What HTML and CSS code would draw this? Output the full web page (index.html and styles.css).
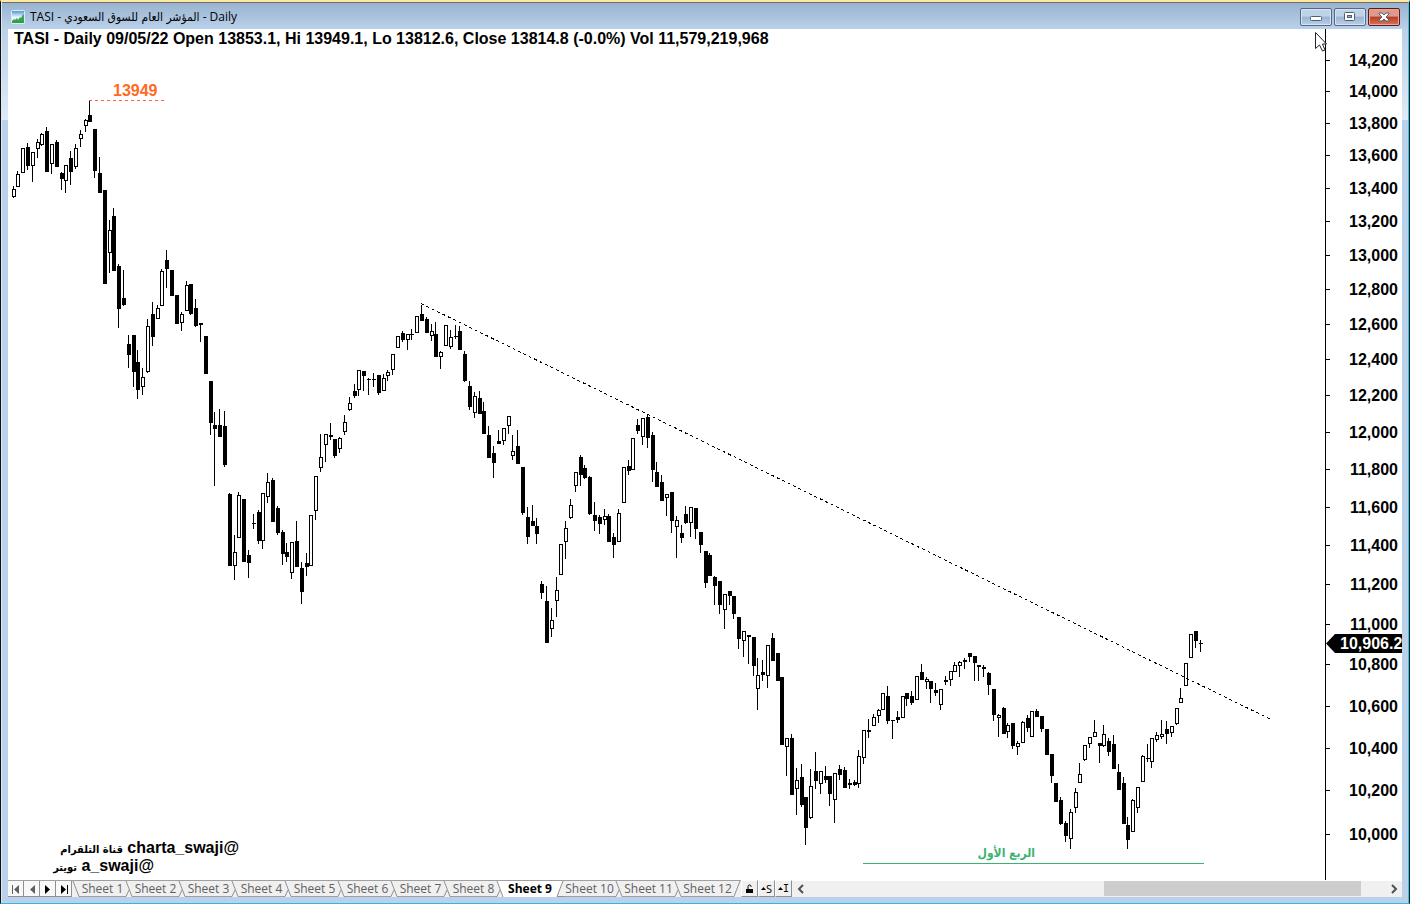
FILE: index.html
```html
<!DOCTYPE html>
<html lang="en">
<head>
<meta charset="utf-8">
<title>TASI - Daily</title>
<link rel="stylesheet" href="styles.css">
</head>
<body>
<div class="window">
  <header class="titlebar">
    <svg class="app-icon" width="14" height="14" viewBox="0 0 14 14" aria-hidden="true">
      <defs>
        <linearGradient id="sky" x1="0" y1="0" x2="0" y2="1"><stop offset="0" stop-color="#4a90d0"/><stop offset="0.5" stop-color="#e8f4fc"/><stop offset="1" stop-color="#fff"/></linearGradient>
        <linearGradient id="hill" x1="0" y1="0" x2="0" y2="1"><stop offset="0" stop-color="#3a9ac8"/><stop offset="0.5" stop-color="#3aa648"/><stop offset="1" stop-color="#2f9c44"/></linearGradient>
      </defs>
      <rect x="0.5" y="0.5" width="13" height="13" rx="1" fill="url(#sky)" stroke="#d8ecfa"/>
      <path d="M1 13V11l2-2 1 1 2-2 1 2 2-3 1 1 2-4 1 1v8z" fill="url(#hill)"/>
    </svg>
    <h1 class="caption" dir="ltr">TASI - <bdi class="caption-ar">المؤشر العام للسوق السعودي</bdi> - Daily</h1>
    <div class="controls">
      <button class="control" type="button" aria-label="Minimize"><svg width="12" height="12" viewBox="0 0 12 12"><rect x="0.5" y="5.5" width="11" height="4" rx="1" fill="#fff" stroke="#535f70"/></svg></button>
      <button class="control" type="button" aria-label="Maximize"><svg width="12" height="12" viewBox="0 0 12 12"><rect x="0.5" y="1.5" width="10" height="8" rx="1" fill="#fff" stroke="#535f70"/><rect x="3.500" y="4.500" width="4" height="2" fill="#8fb0d4" stroke="#535f70"/></svg></button>
      <button class="control control-close" type="button" aria-label="Close"><svg width="12" height="12" viewBox="0 0 12 12"><path d="M1 2h3l2 2 2-2h3v1L8 6l3 3v1H8L6 8l-2 2H1V9l3-3-3-3z" fill="#fff" stroke="#535f70"/></svg></button>
    </div>
  </header>

  <main class="client">
    <svg class="chart" viewBox="8 29 1394 851" role="img" aria-label="TASI daily candlestick chart">
      <text class="label" x="14" y="44">TASI - Daily 09/05/22 Open 13853.1, Hi 13949.1, Lo 13812.6, Close 13814.8 (-0.0%) Vol 11,579,219,968</text>
      <g id="candles" class="candles"></g>
      <path class="trend" d="M421 303.500L1271 719.500"/>
      <path class="peak-line" d="M89 100.500H164"/>
      <text class="label peak" x="113" y="96">13949</text>
      <path class="base-line" d="M863 863.500H1204"/>
      <text class="label quarter" x="1035" y="857" direction="rtl">الربع الأول</text>
      <text class="label" x="239" y="853" direction="rtl">@charta_swaji <tspan class="ar">قناة التلقرام</tspan></text>
      <text class="label" x="154" y="871" direction="rtl">@a_swaji <tspan class="ar">تويتر</tspan></text>
      <path class="axis" d="M1325.500 29V880"/>
      <g id="scale"></g>
      <path d="M1326 643.500L1335 634H1402V653H1335z"/>
      <text class="label last" x="1340" y="649">10,906.2</text>
      <path class="pointer" d="M1315.500 32.500V48.500L1319.500 45L1322.500 51L1325 50L1322.500 44H1326.500z"/>
    </svg>

    <footer class="bottom">
      <nav class="steps" aria-label="Sheet navigation">
        <button class="step dim" type="button" aria-label="First sheet"><svg width="12" height="12" viewBox="0 0 12 12"><path d="M2 2h1v9H2zM9 2v9L4 6.500z"/></svg></button>
        <button class="step dim" type="button" aria-label="Previous sheet"><svg width="12" height="12" viewBox="0 0 12 12"><path d="M9 2v9L4 6.500z"/></svg></button>
        <button class="step" type="button" aria-label="Next sheet"><svg width="12" height="12" viewBox="0 0 12 12"><path d="M3 2v9l5-4.500z"/></svg></button>
        <button class="step" type="button" aria-label="Last sheet"><svg width="12" height="12" viewBox="0 0 12 12"><path d="M3 2v9l5-4.500zM9 2h1v9H9z"/></svg></button>
      </nav>
      <div class="tabs" id="tabs" role="tablist"></div>
      <div class="tools">
        <button class="tool" type="button" aria-label="Lock"><svg width="10" height="12" viewBox="0 0 10 12"><path d="M1 6h7v4H1z"/><path d="M3 6V3.500a1.500 1.500 0 0 1 3 0V4" fill="none" stroke="#000"/></svg></button>
        <button class="tool" type="button"><svg width="5" height="3" viewBox="0 0 5 3"><path d="M0 3L2.500 0L5 3z"/></svg>S</button>
        <button class="tool" type="button"><svg width="5" height="3" viewBox="0 0 5 3"><path d="M0 3L2.500 0L5 3z"/></svg><span class="serif-i">I</span></button>
      </div>
      <div class="scroll">
        <button class="arrow" type="button" aria-label="Scroll left"><svg width="8" height="10" viewBox="0 0 8 10"><path d="M6 1L2 5l4 4"/></svg></button>
        <div class="track"><div class="before"></div><div class="thumb"></div><div class="after"></div></div>
        <button class="arrow" type="button" aria-label="Scroll right"><svg width="8" height="10" viewBox="0 0 8 10"><path d="M2 1l4 4-4 4"/></svg></button>
      </div>
    </footer>
  </main>
</div>
<script src="chart.js"></script>
</body>
</html>
```
FILE: styles.css
```css
* { box-sizing: border-box; }
body {
  margin: 0;
  height: 100vh;
  overflow: hidden;
  background: #b9d1ea;
  font: 12px/16px "Open Sans", "Noto Sans", "DejaVu Sans", sans-serif;
  color: #000;
}
button { margin: 0; padding: 0; font: inherit; color: inherit; }
.window {
  display: flex;
  flex-direction: column;
  height: 100%;
  border-left: 1px solid #101010;
  border-right: 1px solid #102028;
  border-bottom: 1px solid #34b8d8;
  border-top: 2px solid #ffe8a0;
  box-shadow: inset 1px 0 #dce8f4, inset -1px 0 #34c4e4;
  background: linear-gradient(#b9d1ea 26px, #dfeaf6 118px, #b9d1ea 118px);
}
.titlebar {
  display: flex;
  align-items: center;
  height: 27px;
  flex: none;
  margin: 0 1px;
  padding: 1px 8px 0 9px;
  border-top: 1px solid #6c6c6c;
  background: linear-gradient(#9ab3cf, #b9d1ea);
}
.app-icon { margin-right: 5px; }
.caption { margin: 0; flex: 1; font-size: 12px; font-weight: 400; line-height: 18px; white-space: nowrap; }
.caption-ar { font-family: "DejaVu Sans Condensed", "DejaVu Sans", sans-serif; font-size: 12px; }
.controls { display: flex; gap: 2px; }
.control {
  display: flex;
  align-items: center;
  justify-content: center;
  width: 32px;
  height: 18px;
  border: 1px solid #56677f;
  border-radius: 2px;
  box-shadow: inset 0 0 0 1px #d5e3f2;
  background: linear-gradient(#bfd3e8 45%, #98b4d3 50%, #b8d0e8);
}
.control-close {
  border-color: #5c1a1a;
  box-shadow: inset 0 0 0 1px #e6a79c;
  background: linear-gradient(#e09a8c 45%, #b93a22 50%, #d5795a);
}
.client {
  display: flex;
  flex-direction: column;
  flex: 1;
  min-height: 0;
  margin: 0 7px 6px;
  background: #fff;
}
.chart { display: block; flex: 1; min-height: 0; width: 100%; }
.label { font: bold 16px "Liberation Sans", "DejaVu Sans", sans-serif; fill: #000; }
.label.peak { fill: #ff6a1f; }
.label.quarter { font: bold 12px "DejaVu Sans Condensed", "DejaVu Sans", sans-serif; fill: #3cb371; }
.label .ar { font: bold 11px "DejaVu Sans Condensed", "DejaVu Sans", sans-serif; }
.label.last { fill: #fff; }
.candles, .trend, .peak-line, .base-line, .axis { shape-rendering: crispEdges; }
.hollow { fill: #fff; stroke: #000; }
.trend { stroke: #000; stroke-dasharray: 3 3; }
.peak-line { stroke: #ff6347; stroke-dasharray: 3 3; }
.base-line { stroke: #3cb371; }
.axis { stroke: #000; }
.pointer { fill: #fff; stroke: #202030; }
.bottom { display: flex; flex: none; height: 17px; background: #f0f0f0; }
.steps { display: flex; border-top: 1px solid #a0a0a0; }
.step {
  display: flex;
  align-items: center;
  justify-content: center;
  width: 16px;
  border: 0;
  border-right: 1px solid #909090;
  border-bottom: 1px solid #909090;
  background: #f8f8f8;
}
.step.dim { fill: #606060; }
.tabs { display: flex; border-top: 1px solid #a0a0a0; }
.tab {
  width: 45px;
  border: 0;
  border-bottom: 1px solid #a0a0a0;
  background: #f0f0f0;
  color: #606060;
  line-height: 14px;
  white-space: nowrap;
}
.tab.wide { width: 51px; }
.tab.active { width: 52px; border-color: #fff; background: #fff; color: #000; font-weight: 700; }
.edge { display: block; fill: none; stroke: #909090; }
.tools { display: flex; }
.tool {
  display: flex;
  align-items: center;
  justify-content: center;
  width: 17px;
  border: 1px solid #909090;
  border-top-color: #fff;
  border-left-color: #fff;
  background: #f0f0f0;
  font-size: 11px;
}
.serif-i { font-family: "DejaVu Sans Mono", monospace; font-size: 10px; }
.scroll { display: flex; flex: 1; padding-bottom: 1px; border-top: 1px solid #fff; }
.arrow { display: flex; align-items: center; justify-content: center; width: 17px; border: 0; background: none; }
.arrow path { fill: none; stroke: #505050; stroke-width: 2; }
.track { display: flex; flex: 1; }
.before { flex: 296; }
.thumb { flex: 257; background: #cdcdcd; }
.after { flex: 24; }
```
FILE: chart.js
```js
const NS = "http://www.w3.org/2000/svg";

function add(parent, name, attrs) {
  const el = document.createElementNS(NS, name);
  for (const key in attrs) el.setAttribute(key, attrs[key]);
  parent.appendChild(el);
  return el;
}

// Each entry: x, high, body top, body bottom, low; a trailing "w" marks a rising day.
const days = `13 186 189 197 198 w;17 171 174 187 187 w;22 148 148 173 173 w;27 143 147 166 170;32 152 152 166 182 w;37 139 142 149 158 w;41 133 134 145 146 w;46 127 131 172 172;51 144 144 164 174 w;56 140 142 167 167;61 172 173 179 190;65 165 165 181 193 w;70 151 158 172 185;75 144 148 167 169 w;80 130 134 139 147 w;85 119 120 126 132 w;89 100 115 122 122;94 129 129 171 178;99 157 173 193 193;104 190 190 284 284;109 220 230 253 273 w;113 208 216 271 271;118 264 266 309 328;123 270 298 305 306;128 335 344 355 368;133 335 335 372 387;137 350 362 390 399;142 368 377 387 395 w;147 319 326 372 373 w;152 302 314 337 346;157 305 308 319 319 w;161 269 271 306 306 w;166 250 260 269 288;171 270 270 296 296;176 295 295 324 324;181 312 314 323 331 w;186 281 285 311 311 w;190 284 284 314 315;195 299 308 326 327;200 323 323 325 342;205 336 336 374 374;210 381 381 423 435;214 412 425 429 486;219 409 425 437 437;224 411 426 465 467;229 493 494 566 566;234 535 552 566 580 w;238 492 495 538 538 w;243 499 499 562 562;248 550 555 563 578;253 514 523 524 529;258 510 512 541 544;262 493 493 541 549 w;267 473 482 497 503 w;272 478 480 522 522;277 506 508 533 535;282 530 532 554 565;286 543 552 557 562;291 542 542 573 579 w;296 521 541 567 567;301 562 568 592 604;306 553 563 567 576;310 515 515 566 566 w;315 476 476 511 520 w;320 434 457 468 472 w;325 434 434 445 462 w;330 423 435 437 440;334 439 439 456 458;339 437 438 449 453 w;344 415 422 432 435 w;349 397 403 410 411 w;354 384 391 396 398;358 370 370 390 396 w;363 371 371 376 391;368 378 379 380 395;373 373 379 380 387;378 375 375 393 395;383 374 378 391 391 w;387 370 372 376 381 w;392 354 354 370 375 w;397 336 336 348 348 w;402 331 333 340 342;407 334 334 340 350 w;411 329 334 335 340;416 316 316 333 333 w;421 305 314 321 321;426 317 319 333 333;431 324 331 336 341 w;435 322 334 357 357;440 351 352 357 369 w;445 325 325 346 346 w;450 330 337 347 349 w;455 325 336 337 339;459 326 331 350 350;464 351 354 381 382;469 381 386 407 410;474 392 396 413 418 w;479 391 398 414 414;483 402 411 434 434;488 426 435 458 458;493 446 453 463 478;498 430 441 444 444;503 428 428 441 445 w;508 416 416 426 434 w;512 435 451 456 460 w;517 430 446 464 464;522 467 467 513 515;527 507 517 537 544;532 505 521 526 526;536 518 526 534 544;541 581 584 593 599;546 586 601 643 643;551 608 620 629 637 w;556 577 590 601 617 w;560 544 544 575 575 w;565 521 528 542 559 w;570 499 505 518 519 w;575 472 472 486 492 w;580 455 457 475 486;584 465 468 478 479;589 476 477 514 515;594 502 515 521 531;599 515 517 524 534;604 509 516 520 525 w;608 514 516 542 542;613 533 537 545 558;618 509 513 542 542 w;623 467 467 503 503 w;628 460 466 471 475;632 438 438 470 470 w;637 419 425 431 434;642 418 418 437 445 w;647 414 417 438 448;652 432 435 470 482;656 462 472 487 487;661 475 482 501 501;666 494 494 498 516 w;671 492 492 521 533;676 516 520 527 558 w;681 525 533 538 543;685 506 514 523 524;690 507 507 523 537 w;695 508 508 529 539;700 532 532 545 553;705 551 551 583 588;709 553 555 576 576;714 576 577 586 605;719 581 581 605 614;724 594 594 610 629 w;729 591 591 596 605;733 596 596 614 619;738 617 617 639 649;743 631 631 641 657 w;748 635 635 637 664;753 637 637 666 676;757 658 675 689 710 w;762 660 672 675 681;767 645 645 676 688 w;772 633 638 661 661;777 653 653 681 681;781 677 677 745 745;786 738 738 747 776 w;791 734 738 795 795;796 768 780 789 815 w;801 764 777 805 807;805 797 797 828 845;810 769 786 818 819 w;815 752 771 781 789;820 771 771 784 794 w;825 766 776 780 783;829 776 776 794 806;834 773 773 800 823 w;839 765 769 775 780;844 767 770 788 788;849 779 783 785 789;854 780 782 785 786;858 750 756 784 788 w;863 730 730 758 764 w;868 719 730 732 738;873 714 717 726 726 w;878 709 710 716 723 w;882 693 693 710 710 w;887 686 696 721 724;892 720 720 721 739;897 711 717 720 723;902 696 696 718 718 w;906 693 693 699 706;911 691 696 703 705;916 676 676 700 700 w;921 664 672 680 680;926 677 679 682 689 w;930 681 681 689 703;935 683 690 693 696;940 689 689 705 710 w;945 676 680 682 685;950 671 671 680 686 w;954 662 665 672 672 w;959 661 662 666 677 w;964 658 660 662 669;969 653 653 657 662;974 656 656 663 681;978 665 665 667 681;983 665 667 669 677;988 672 673 685 695;993 689 689 715 721;998 714 715 718 737 w;1003 707 708 734 734;1007 723 725 732 738 w;1012 723 723 746 749;1017 741 743 747 755 w;1022 721 722 743 743 w;1027 715 718 728 732;1031 711 711 737 737 w;1036 709 711 717 717;1041 716 716 729 732;1046 729 729 755 755;1051 754 754 776 783;1055 783 783 802 802;1060 797 800 824 825;1065 821 823 836 842;1070 809 812 839 849 w;1075 788 792 808 813 w;1079 763 774 783 783 w;1084 745 745 760 761 w;1089 737 737 744 748 w;1094 720 732 737 737 w;1099 743 743 746 763;1103 725 734 746 747 w;1108 738 741 752 756;1113 735 744 769 769;1118 764 772 790 790;1123 777 783 824 824;1127 817 825 840 849;1132 799 800 832 832 w;1137 787 787 808 813 w;1142 755 756 782 782 w;1147 744 758 759 762;1151 738 738 762 768 w;1156 732 735 740 742 w;1161 720 734 737 739 w;1166 721 729 734 744;1171 726 726 733 737 w;1176 708 708 724 725 w;1180 688 698 703 703 w;1185 663 663 686 686 w;1190 634 634 658 658 w;1195 631 631 641 648;1200 640 643 644 652`;

const candles = document.getElementById("candles");
for (const day of days.split(";")) {
  const [x, high, top, bottom, low, rising] = day.split(" ");
  add(candles, "rect", { x: x, y: high, width: 1, height: low - high });
  if (rising) {
    add(candles, "rect", { class: "hollow", x: x - 0.5, y: +top + 0.5, width: 3, height: bottom - top - 1 });
  } else {
    add(candles, "rect", { x: x - 1, y: top, width: 4, height: bottom - top });
  }
}

// Logarithmic price scale, 14,200 down to 10,000 in steps of 200.
const scale = document.getElementById("scale");
const ticks = [60, 91, 123, 155, 188, 221, 255, 289, 324, 359, 395, 432, 469, 507, 545, 584, 624, 664, 706, 748, 790, 834];
ticks.forEach((y, i) => {
  add(scale, "rect", { x: 1326, y: y, width: 4, height: 1 });
  const text = add(scale, "text", { class: "label", x: 1398, y: y + 6, "text-anchor": "end" });
  text.textContent = (14200 - i * 200).toLocaleString("en-US");
});

const tabs = document.getElementById("tabs");
function edge(path) {
  const svg = add(tabs, "svg", { class: "edge", width: 8, height: 16, viewBox: "0 0 8 16" });
  if (path.fill) add(svg, "path", { d: path.fill, style: "fill:#fff;stroke:none" });
  add(svg, "path", { d: path.line });
}
edge({ line: "M1 0L7 15.500H8" });
for (let n = 1; n <= 12; n++) {
  const tab = document.createElement("button");
  tab.type = "button";
  tab.className = "tab" + (n === 9 ? " active" : n > 9 ? " wide" : "");
  tab.setAttribute("role", "tab");
  tab.setAttribute("aria-selected", n === 9);
  tab.textContent = "Sheet " + n;
  tabs.appendChild(tab);
  if (n === 8) edge({ fill: "M1 0H8V16H7z", line: "M1 0L7 16M0 15.500H1L4 9" });
  else if (n === 9) edge({ fill: "M0 0H7L1 16H0z", line: "M7 0L1 15.500H8" });
  else if (n === 12) edge({ line: "M0 15.500H1L7 0" });
  else edge({ line: "M1 0L7 15.500H8M0 15.500H1L4 9" });
}
```
